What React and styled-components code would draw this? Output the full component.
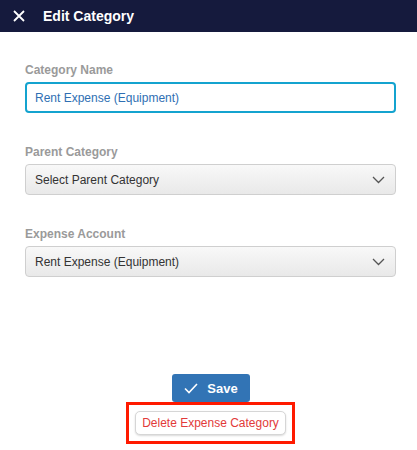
import React from "react";
import styled, { createGlobalStyle } from "styled-components";

const GlobalStyle = createGlobalStyle`
  html, body {
    margin: 0;
    padding: 0;
    background: #ffffff;
  }
  * { box-sizing: border-box; }
`;

const fields = [
  { id: "name", label: "Category Name", value: "Rent Expense (Equipment)", kind: "input" },
  { id: "parent", label: "Parent Category", value: "Select Parent Category", kind: "select" },
  { id: "account", label: "Expense Account", value: "Rent Expense (Equipment)", kind: "select" },
];

const Chevron = () => (
  <svg width="13" height="8" viewBox="0 0 13 8" fill="none">
    <path d="M1 1l5.5 5.5L12 1" stroke="#555" strokeWidth="1.3" />
  </svg>
);

const App = () => {
  return (
    <Page>
      <GlobalStyle />
      <TopBar>
        <CloseIcon viewBox="0 0 12 12">
          <path d="M1 1l10 10M11 1L1 11" stroke="#fff" strokeWidth="1.8" />
        </CloseIcon>
        <Heading>Edit Category</Heading>
      </TopBar>
      <Form>
        {fields.map((f) => (
          <Field key={f.id}>
            <Label>{f.label}</Label>
            {f.kind === "input" ? (
              <TextBox>{f.value}</TextBox>
            ) : (
              <SelectBox>
                <span>{f.value}</span>
                <Chevron />
              </SelectBox>
            )}
          </Field>
        ))}
      </Form>
      <Actions>
        <SaveButton>
          <svg width="14" height="11" viewBox="0 0 14 11" fill="none">
            <path d="M1 5.5l4 4L13 1" stroke="#fff" strokeWidth="1.6" />
          </svg>
          Save
        </SaveButton>
        <Highlight>
          <DeleteButton>Delete Expense Category</DeleteButton>
        </Highlight>
      </Actions>
    </Page>
  );
};

export default App;

const Page = styled.div`
  width: 417px;
  height: 450px;
  display: flex;
  flex-direction: column;
  font-family: "Liberation Sans", Arimo, Arial, Helvetica, sans-serif;
`;
const TopBar = styled.div`
  height: 32px;
  background: #151a3d;
  display: flex;
  align-items: center;
  padding-left: 13px;
  gap: 18px;
`;
const CloseIcon = styled.svg`
  width: 12px;
  height: 12px;
`;
const Heading = styled.div`
  color: #ffffff;
  font-size: 14px;
  font-weight: bold;
`;
const Form = styled.div`
  padding: 31px 21px 0 25px;
  display: flex;
  flex-direction: column;
  gap: 32px;
`;
const Field = styled.div`
  display: flex;
  flex-direction: column;
  gap: 5px;
`;
const Label = styled.div`
  font-size: 12px;
  font-weight: bold;
  color: #9a9a9a;
  line-height: 14px;
`;
const TextBox = styled.div`
  height: 31px;
  border: 2px solid #14a3cf;
  border-radius: 4px;
  display: flex;
  align-items: center;
  padding-left: 8px;
  font-size: 12px;
  color: #2f6fb3;
`;
const SelectBox = styled.div`
  height: 31px;
  border: 1px solid #cfcfcf;
  border-radius: 4px;
  background: linear-gradient(#f8f8f8, #e9e9e9);
  display: flex;
  align-items: center;
  justify-content: space-between;
  padding: 0 10px 0 9px;
  font-size: 12px;
  color: #333333;
`;
const Actions = styled.div`
  margin-top: auto;
  margin-bottom: 6px;
  display: flex;
  flex-direction: column;
  align-items: center;
`;
const SaveButton = styled.div`
  width: 78px;
  height: 28px;
  background: #3274b5;
  border-radius: 3px;
  color: #ffffff;
  font-size: 13px;
  font-weight: bold;
  display: flex;
  align-items: center;
  justify-content: center;
  gap: 9px;
  margin-left: 5px;
`;
const Highlight = styled.div`
  border: 3px solid #ff1a00;
  padding: 6px 6px;
  margin-left: 4px;
`;
const DeleteButton = styled.div`
  height: 24px;
  padding: 0 6px;
  border: 1px solid #d6d6d6;
  border-radius: 5px;
  background: #ffffff;
  box-shadow: 0 1px 2px rgba(0, 0, 0, 0.15);
  color: #e23a3a;
  font-size: 12px;
  display: flex;
  align-items: center;
`;
